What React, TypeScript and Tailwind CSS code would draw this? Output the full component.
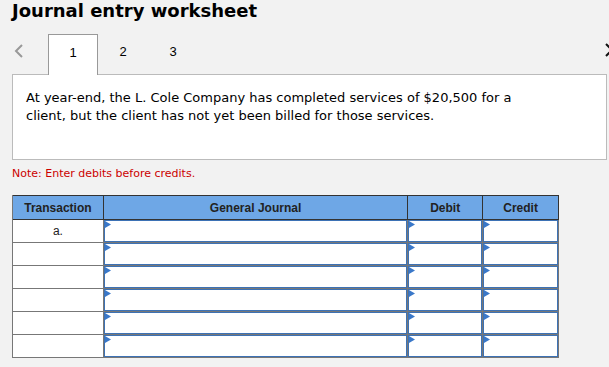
import React from "react";

const rows = ["a.", "", "", "", "", ""];

// small blue marker shown in the corner of each entry field
const Marker = () => (
    <svg className="absolute left-0 top-0" width="7" height="8" viewBox="0 0 7 8">
        <path d="M0 0 L6 3.5 L0 7 Z" fill="#3a78c9" />
    </svg>
);

const EntryCell: React.FC<{ width: string }> = ({ width }) => (
    <div className={`${width} h-full border-r border-[#777]`}>
        <div className="relative h-full border-[1.5px] border-[#3d72b5] bg-white">
            <Marker />
        </div>
    </div>
);

const App: React.FC = () => {
    return (
        <div className="w-[609px] h-[367px] overflow-hidden bg-[#f2f2f2] text-[#222] font-['DejaVu_Sans',sans-serif]">
            {/* Judul */}
            <h1 className="pl-3 pt-0 h-[22px] text-[18px] leading-[22px] font-bold text-black">Journal entry worksheet</h1>

            {/* Tab navigasi */}
            <div className="relative mt-3 h-[40px] flex items-end font-['Liberation_Sans',sans-serif] text-[13px] text-black">
                <span className="absolute left-[14px] top-[10px] text-[#999]">
                    <svg width="10" height="14" viewBox="0 0 10 14">
                        <path d="M8 1 L2 7 L8 13" stroke="#999" strokeWidth="2" fill="none" />
                    </svg>
                </span>
                <div className="ml-[48px] w-[50px] h-[41px] -mb-px border border-b-0 border-[#999] bg-white flex justify-center pt-[8px] relative z-10">
                    1
                </div>
                <div className="w-[50px] h-[40px] flex justify-center pt-[8px]">2</div>
                <div className="w-[50px] h-[40px] flex justify-center pt-[8px]">3</div>
                <span className="absolute left-[604px] top-[9px]">
                    <svg width="8" height="14" viewBox="0 0 8 14">
                        <path d="M2 1 L8 7 L2 13" stroke="#111" strokeWidth="2" fill="none" />
                    </svg>
                </span>
            </div>

            {/* Panel soal */}
            <div className="mx-3 w-[595px] h-[86px] border border-[#bbb] bg-white px-[13px] pt-[14px] text-[13px] leading-[18px] text-black">
                <p>
                    At year-end, the L. Cole Company has completed services of $20,500 for a
                    <br />
                    client, but the client has not yet been billed for those services.
                </p>
            </div>

            <p className="pl-3 mt-[7px] text-[11px] leading-[14px] text-[#c00]">Note: Enter debits before credits.</p>

            {/* Tabel jurnal */}
            <div className="ml-3 mt-[14px] w-[547px] border-l border-[#777] font-['Liberation_Sans',sans-serif]">
                <div className="flex h-[25px] bg-[#6ea7e6] border border-l-0 border-[#333] text-[12px] font-bold text-[#222]">
                    <div className="w-[91px] border-r border-[#333] flex items-center justify-center">Transaction</div>
                    <div className="w-[305px] border-r border-[#333] flex items-center justify-center">General Journal</div>
                    <div className="w-[75px] border-r border-[#333] flex items-center justify-center">Debit</div>
                    <div className="w-[75px] flex items-center justify-center">Credit</div>
                </div>
                {rows.map((label, i) => (
                    <div key={i} className="flex h-[23px] border-b border-[#777] bg-white">
                        <div className="w-[91px] h-full border-r border-[#777] flex items-center justify-center text-[12px] text-[#222]">
                            {label}
                        </div>
                        <EntryCell width="w-[305px]" />
                        <EntryCell width="w-[75px]" />
                        <EntryCell width="w-[76px]" />
                    </div>
                ))}
            </div>
        </div>
    );
};

export default App;
